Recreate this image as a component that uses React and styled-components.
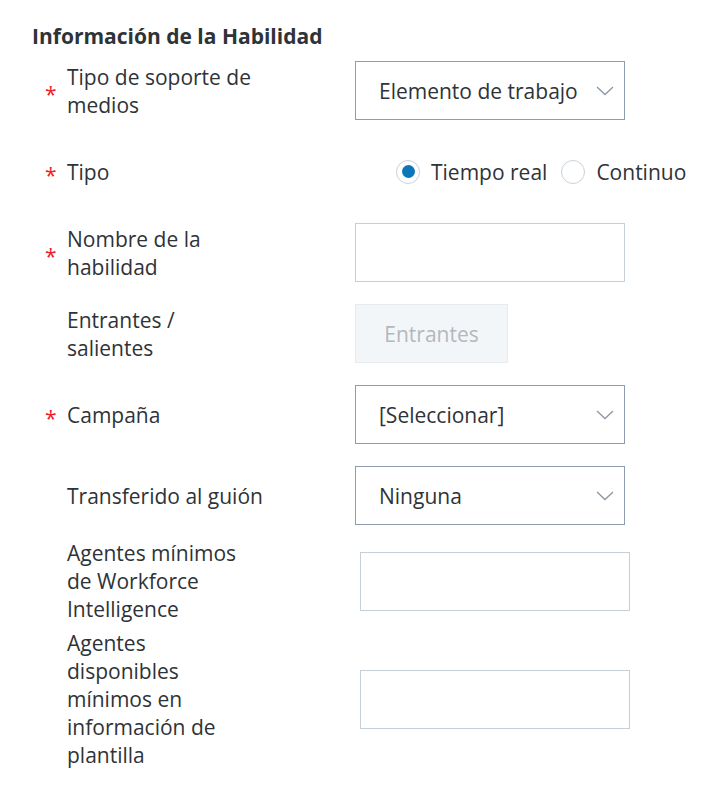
import React from "react";
import styled, { createGlobalStyle } from "styled-components";

const Global = createGlobalStyle`
  html, body { margin: 0; padding: 0; background: #fff; }
  body { font-family: "Open Sans", "Liberation Sans", sans-serif; color: #2e3338; }
`;

const Page = styled.div`
  padding: 22px 0 0 32px;
`;

const Heading = styled.h2`
  margin: 0 0 11px 0;
  font-size: 21px;
  line-height: 28px;
  font-weight: 700;
  color: #2e3338;
`;

const Group = styled.div`
  display: flex;
  flex-direction: column;
  gap: ${(p) => p.$gap}px;
  margin-top: ${(p) => p.$top || 0}px;
`;

const Row = styled.div`
  display: grid;
  grid-template-columns: 35px ${(p) => p.$labelCol}px 1fr;
  align-items: center;
  min-height: 59px;
`;

const Star = styled.span`
  color: #ee1c24;
  font-size: 21px;
  line-height: 28px;
  padding-left: 13px;
  padding-top: 6px;
`;

const Label = styled.div`
  font-size: 21px;
  line-height: 28px;
  max-width: ${(p) => p.$max}px;
  color: #2e3338;
`;

const SelectBox = styled.div`
  box-sizing: border-box;
  width: 270px;
  height: 59px;
  border: 1px solid #8e9caf;
  display: flex;
  align-items: center;
  justify-content: space-between;
  padding: 0 10px 0 23px;
  font-size: 21px;
  color: #2e3338;
`;

const TextBox = styled.div`
  box-sizing: border-box;
  width: 270px;
  height: 59px;
  border: 1px solid #c4cfd8;
  background: #fff;
`;

const DisabledBox = styled.div`
  box-sizing: border-box;
  width: 153px;
  height: 59px;
  border: 1px solid #e6ebef;
  background: #f3f6f9;
  color: #b4b8bc;
  font-size: 21px;
  display: flex;
  align-items: center;
  justify-content: center;
`;

const RadioGroup = styled.div`
  display: flex;
  align-items: center;
  padding-left: 41px;
  white-space: nowrap;
`;

const RadioOption = styled.label`
  display: flex;
  align-items: center;
  gap: 11px;
  font-size: 21px;
  margin-right: 14px;
  color: #2e3338;
`;

const RadioCircle = styled.span`
  box-sizing: border-box;
  width: 24px;
  height: 24px;
  border-radius: 50%;
  border: 1px solid #c9d2da;
  display: flex;
  align-items: center;
  justify-content: center;
  &::after {
    content: "";
    width: 13px;
    height: 13px;
    border-radius: 50%;
    background: ${(p) => (p.$checked ? "#0a78b8" : "transparent")};
  }
`;

const Chevron = () => (
  <svg width="18" height="10" viewBox="0 0 18 10" fill="none">
    <path d="M1 1 L9 8.5 L17 1" stroke="#8a97a3" strokeWidth="1.3" />
  </svg>
);

function Select({ value }) {
  return (
    <SelectBox>
      <span>{value}</span>
      <Chevron />
    </SelectBox>
  );
}

export default function App() {
  return (
    <>
      <Global />
      <Page>
        <Heading>Información de la Habilidad</Heading>
        <Group $gap={22}>
          <Row $labelCol={288}>
            <Star>*</Star>
            <Label $max={197}>Tipo de soporte de medios</Label>
            <Select value="Elemento de trabajo" />
          </Row>
          <Row $labelCol={288}>
            <Star>*</Star>
            <Label $max={197}>Tipo</Label>
            <RadioGroup>
              <RadioOption>
                <RadioCircle $checked />
                Tiempo real
              </RadioOption>
              <RadioOption>
                <RadioCircle />
                Continuo
              </RadioOption>
            </RadioGroup>
          </Row>
          <Row $labelCol={288}>
            <Star>*</Star>
            <Label $max={197}>Nombre de la habilidad</Label>
            <TextBox />
          </Row>
          <Row $labelCol={288}>
            <span />
            <Label $max={197}>Entrantes / salientes</Label>
            <DisabledBox>Entrantes</DisabledBox>
          </Row>
          <Row $labelCol={288}>
            <Star>*</Star>
            <Label $max={197}>Campaña</Label>
            <Select value="[Seleccionar]" />
          </Row>
          <Row $labelCol={288}>
            <span />
            <Label $max={197}>Transferido al guión</Label>
            <Select value="Ninguna" />
          </Row>
        </Group>
        <Group $gap={6} $top={14}>
          <Row $labelCol={293}>
            <span />
            <Label $max={180}>Agentes mínimos de Workforce Intelligence</Label>
            <TextBox />
          </Row>
          <Row $labelCol={293}>
            <span />
            <Label $max={180}>
              Agentes disponibles mínimos en información de plantilla
            </Label>
            <TextBox />
          </Row>
        </Group>
      </Page>
    </>
  );
}
